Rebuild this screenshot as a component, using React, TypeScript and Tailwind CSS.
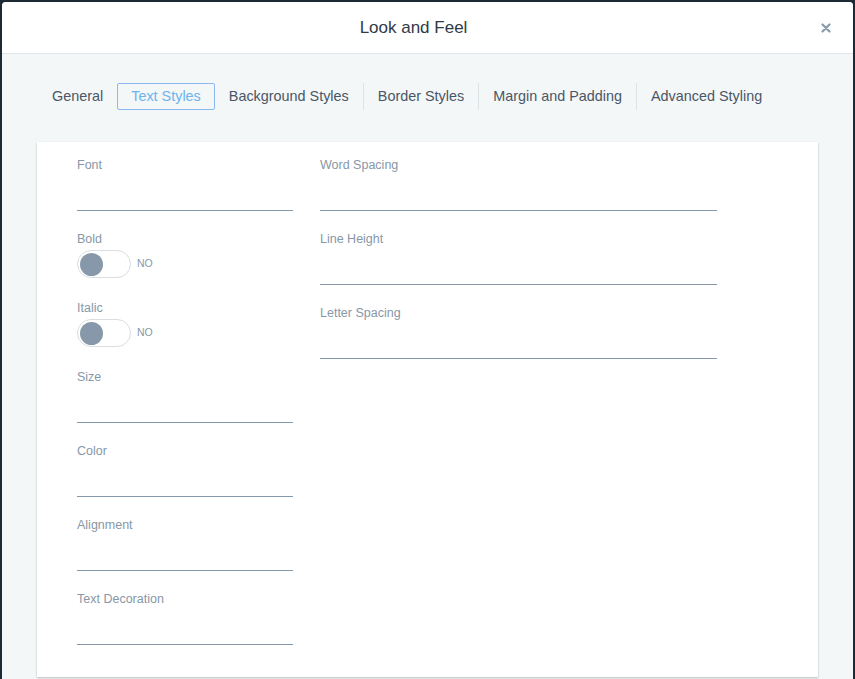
import React from 'react';

const TABS = ['General', 'Text Styles', 'Background Styles', 'Border Styles', 'Margin and Padding', 'Advanced Styling'];

function Field({ label, wide }: { label: string; wide?: boolean }) {
  return (
    <div className={`mb-[20px] ${wide ? 'w-[397px]' : 'w-[216px]'}`}>
      <div className="h-4 text-[12.5px] leading-4 text-[#8797a8]">{label}</div>
      <div className="h-[38px] border-b border-[#8498aa]" />
    </div>
  );
}

function Toggle({ label }: { label: string }) {
  return (
    <div className="mb-[22px]">
      <div className="h-4 text-[12.5px] leading-4 text-[#8797a8]">{label}</div>
      <div className="mt-[3px] flex items-center gap-[6px]">
        <div className="flex h-[28px] w-[54px] items-center rounded-full border border-[#d9dee3] bg-white pl-[2px]">
          <div className="h-[23px] w-[23px] rounded-full bg-[#8698aa]" />
        </div>
        <span className="text-[10.5px] text-[#8797a8]">NO</span>
      </div>
    </div>
  );
}

export default function App() {
  return (
    <div className="h-[679px] w-[855px] overflow-hidden bg-[#1c2a35] pl-[2px] pt-[2px] font-[Liberation_Sans,Arial,sans-serif]">
      <div className="h-[720px] w-[851px] overflow-hidden rounded-t-[4px] bg-[#f4f7f8]">
        {/* header */}
        <div className="relative flex h-[52px] items-center justify-center border-b border-[#e1e5e8] bg-white">
          <h1 className="mr-[28px] text-[17px] text-[#2f3a46]">Look and Feel</h1>
          <svg className="absolute right-[22px] top-[21px]" width="10" height="10" viewBox="0 0 10 10">
            <path d="M1.5 1.5 L8.5 8.5 M8.5 1.5 L1.5 8.5" stroke="#8a9bab" strokeWidth="2.2" strokeLinecap="round" />
          </svg>
        </div>

        {/* tabs */}
        <div className="ml-[36px] mt-[29px] flex h-[27px] items-stretch text-[14.4px]">
          {TABS.map((t, i) => {
            const active = t === 'Text Styles';
            return (
              <React.Fragment key={t}>
                {i > 2 && <div className="w-px bg-[#dde2e6]" />}
                <div
                  className={`flex items-center ${
                    active ? 'rounded-[2px] border border-[#8cb9f3] px-[13px] text-[#6cb4ee]' : 'px-[14px] text-[#4a5666]'
                  }`}
                >
                  {t}
                </div>
              </React.Fragment>
            );
          })}
        </div>

        {/* card */}
        <div className="ml-[35px] mt-[32px] flex h-[535px] w-[781px] gap-[27px] bg-white pl-[40px] pt-[15px] shadow-[0_1px_2px_rgba(0,0,0,0.25)]">
          <div className="flex flex-col">
            <Field label="Font" />
            <Toggle label="Bold" />
            <Toggle label="Italic" />
            <Field label="Size" />
            <Field label="Color" />
            <Field label="Alignment" />
            <Field label="Text Decoration" />
          </div>
          <div className="flex flex-col">
            <Field label="Word Spacing" wide />
            <Field label="Line Height" wide />
            <Field label="Letter Spacing" wide />
          </div>
        </div>
      </div>
    </div>
  );
}
